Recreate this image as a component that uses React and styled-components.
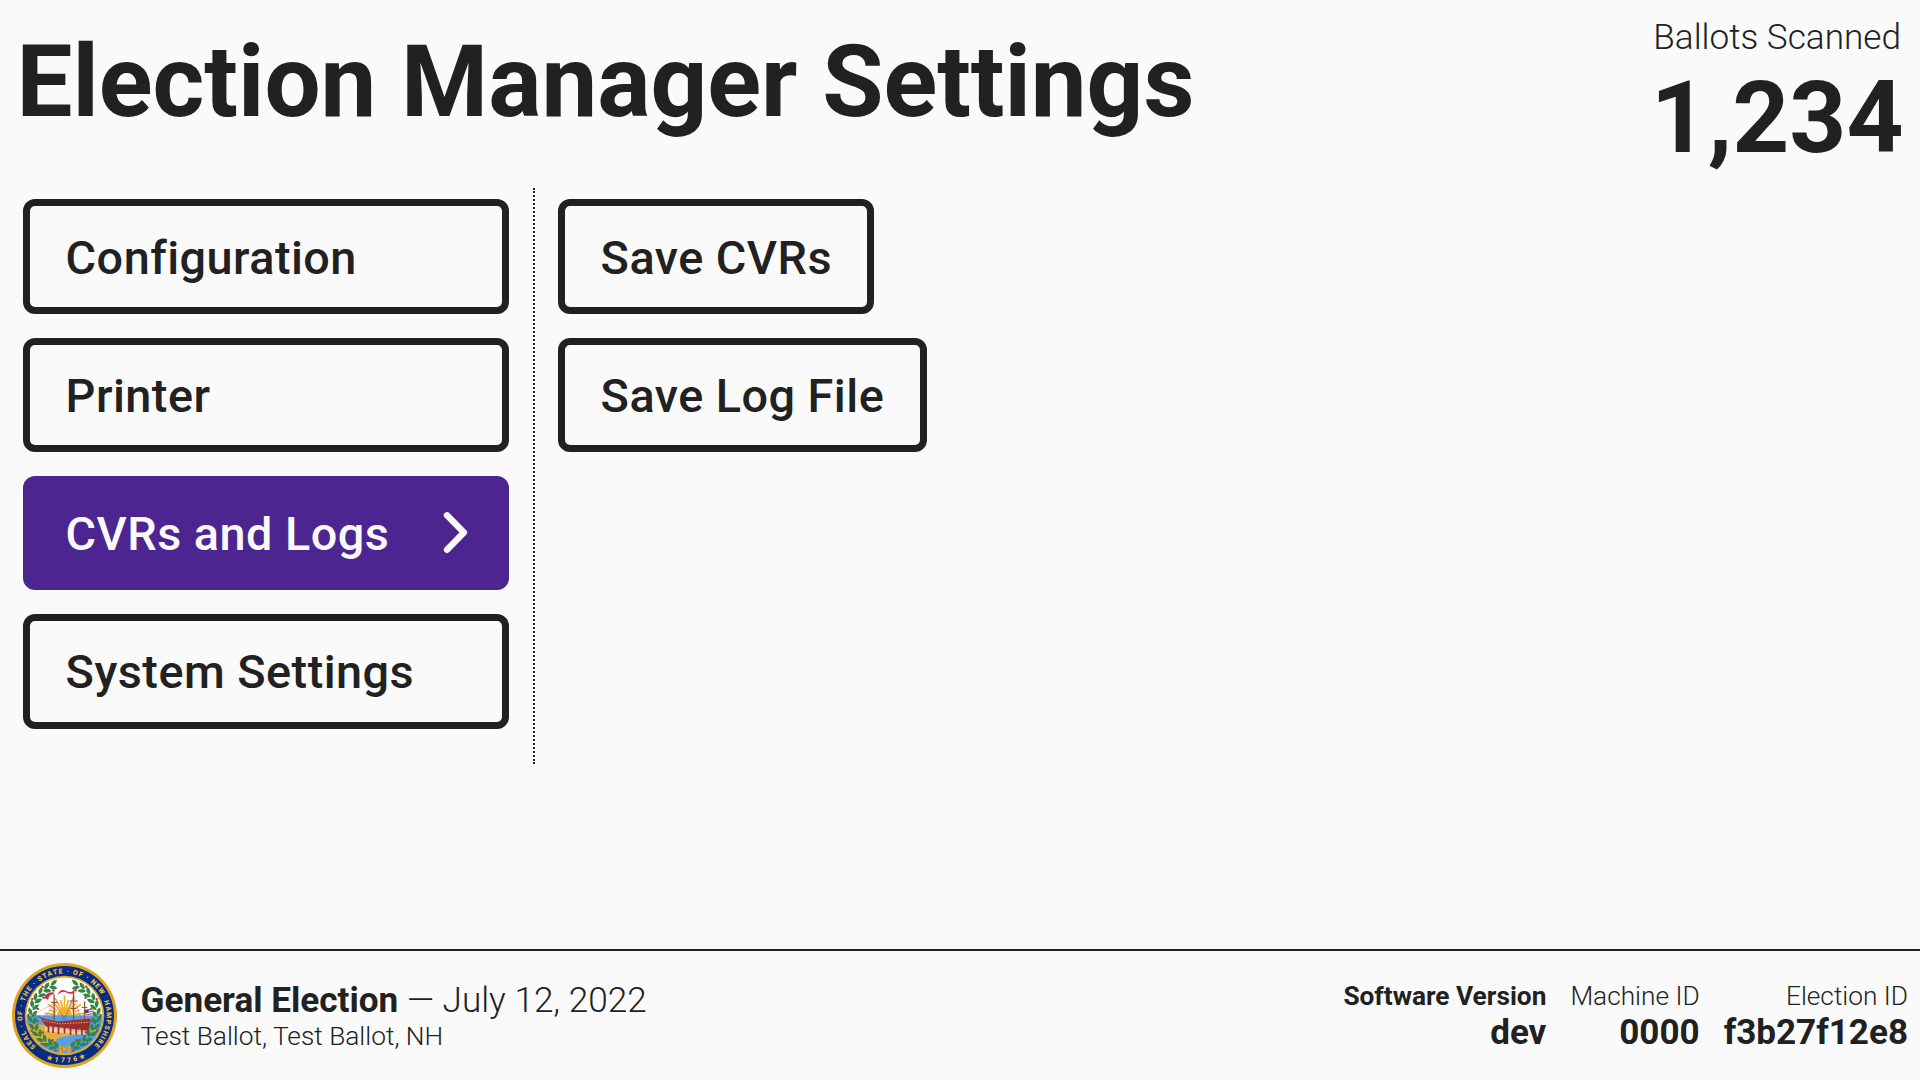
import React from 'react';
import styled, { createGlobalStyle, css } from 'styled-components';

const INK = '#212121';
const PAPER = '#fafafa';
const PURPLE = '#4d2590';

const GlobalStyle = createGlobalStyle`
  *, *::before, *::after { box-sizing: border-box; }
  html, body, #root { height: 100%; }
  body {
    margin: 0;
    background: ${PAPER};
    color: ${INK};
    font-family: Roboto, 'Liberation Sans', sans-serif;
    overflow: hidden;
  }
`;

const Screen = styled.div`
  display: flex;
  flex-direction: column;
  width: 100%;
  height: 100vh;
`;

const Header = styled.header`
  display: flex;
  justify-content: space-between;
  align-items: flex-start;
  height: 188px;
  padding: 17px 16.5px 0;
`;

const Title = styled.h1`
  margin: 7px 0 0;
  font-size: 99.5px;
  line-height: 117px;
  font-weight: 700;
  white-space: nowrap;
`;

const BallotCount = styled.div`
  display: flex;
  flex-direction: column;
  align-items: flex-end;
`;

const CountLabel = styled.div`
  padding-right: 2.5px;
  font-size: 35.15px;
  line-height: 41px;
  font-weight: 300;
`;

const CountValue = styled.div`
  margin-top: 2px;
  font-size: 99.5px;
  line-height: 117px;
  font-weight: 700;
`;

const Main = styled.main`
  display: flex;
  flex: 1;
  align-items: flex-start;
`;

const Column = styled.div`
  display: flex;
  flex-direction: column;
  align-items: ${(p) => (p.$fill ? 'stretch' : 'flex-start')};
  gap: 23.9px;
  padding: 11.4px 23px 35.3px;
`;

const TabColumn = styled(Column)`
  width: 535px;
  padding-right: 24px;
  border-right: 2px dotted ${INK};
`;

const Button = styled.button`
  display: flex;
  align-items: center;
  justify-content: space-between;
  height: 114.4px;
  padding: 3px 35.3px 0 35.6px;
  border: 7px solid ${INK};
  border-radius: 12px;
  background: transparent;
  color: ${INK};
  font: 500 46.8px/55px Roboto, 'Liberation Sans', sans-serif;
  letter-spacing: 0.01em;
  white-space: nowrap;
  ${(p) =>
    p.$selected &&
    css`
      border-color: ${PURPLE};
      background: ${PURPLE};
      color: ${PAPER};
    `}
`;

const Chevron = styled.svg`
  width: 24px;
  height: 44px;
  margin-bottom: 3px;
  overflow: visible;
`;

const Footer = styled.footer`
  display: flex;
  align-items: center;
  height: 131px;
  padding: 0 12px;
  border-top: 2px solid ${INK};
`;

const SealImage = styled.svg`
  width: 105px;
  height: 105px;
  margin-right: 23.5px;
`;

const ElectionInfo = styled.div`
  flex: 1;
  white-space: nowrap;
`;

const ElectionLine = styled.div`
  font-size: 35.15px;
  line-height: 41px;
  font-weight: 300;
`;

const Strong = styled.span`
  font-weight: 700;
`;

const PrecinctLine = styled.div`
  margin-bottom: -1px;
  font-size: 26.3px;
  line-height: 31px;
  font-weight: 300;
`;

const Facts = styled.div`
  display: flex;
  gap: 24px;
`;

const Fact = styled.div`
  text-align: right;
  white-space: nowrap;
`;

const FactLabel = styled.div`
  padding-top: 2px;
  font-size: 26.25px;
  line-height: 31px;
  font-weight: ${(p) => (p.$bold ? 700 : 300)};
`;

const FactValue = styled.div`
  font-size: 35.05px;
  line-height: 40px;
  font-weight: 700;
`;

const SealText = styled.text`
  font: 900 20.5px Roboto, 'Liberation Sans', sans-serif;
  fill: #f0bd3c;
`;

const polar = (deg, r) => {
  const a = (deg * Math.PI) / 180;
  return [194 + r * Math.sin(a), 226 - r * Math.cos(a)];
};

const WREATH = [18, 31, 44, 57, 70, 83, 96, 109, 122, 135, 148, 160];

function Leaf({ deg, r, tilt }) {
  const [x, y] = polar(deg, r);
  return (
    <path
      d="M-13 0 Q0 -12 13 0 Q0 11 -13 0Z"
      transform={`translate(${x} ${y}) rotate(${tilt})`}
    />
  );
}

function Seal() {
  const sides = [1, -1];
  return (
    <SealImage viewBox="37 69 314 314" aria-label="Seal of the State of New Hampshire">
      <circle cx="194" cy="226" r="157" fill="#e2a21c" />
      <circle cx="194" cy="226" r="148" fill="#062d83" />
      <circle cx="194" cy="226" r="119" fill="#e2a21c" />
      <circle cx="194" cy="226" r="114" fill="#fff" />
      <clipPath id="seal-inner">
        <circle cx="194" cy="226" r="114" />
      </clipPath>
      <g clipPath="url(#seal-inner)">
        <g stroke="#edae2c" strokeWidth="5">
          {[-84, -70, -56, -42, -28, -14, 0, 14, 28, 42, 56, 70, 84].map((d, i) => {
            const [x1, y1] = polar(d, 26);
            const [x2, y2] = polar(d, i % 2 ? 48 : 60);
            return <line key={d} x1={x1} y1={y1} x2={x2} y2={y2} />;
          })}
        </g>
        <circle cx="194" cy="222" r="22" fill="#f2b22f" />
        <path d="M75 225 H313 V345 H75Z" fill="#539fe8" />
        <path d="M75 256 Q110 248 150 258 L285 268 L300 274 L225 284 Q185 288 168 296 Q180 302 150 307 L90 312Z" fill="#e5ad3c" />
        <g stroke="#9b4a43" strokeWidth="4" fill="none">
          <path d="M163 164 V244 M221 148 V250 M254 184 V252" />
          <path d="M153 187 H174 M209 183 H233 M212 205 H230 M246 202 H262" strokeWidth="3" />
          <path d="M104 221 L163 190 L132 238 M163 182 L195 240 L221 165 L246 245 M221 185 L187 240" strokeWidth="1" />
        </g>
        <path d="M104 222 L130 235 L175 244 L272 235 L266 279 L144 262 Q130 252 125 236Z" fill="#9e3029" />
        <path d="M132 241 L178 251 L268 246" fill="none" stroke="#ddb0a0" strokeWidth="3" strokeDasharray="4 4" />
        <path d="M134 261 L151 258 L260 271 L258 284 L138 273Z" fill="#f3ded4" opacity="0.75" />
        <path d="M146 256 V276 M160 257 V278 M176 258 V282 M194 259 V280 M212 260 V284 M229 260 V283 M246 260 V284" stroke="#922e29" strokeWidth="5" />
        <path d="M173 164 Q181 144 197 152 T222 151 L224 159 Q210 163 199 157 T173 164Z M132 173 Q143 155 162 157 L162 164 Q149 160 145 179Z" fill="#d32b42" />
        {sides.map((s) => (
          <g key={s}>
            <g fill="#34873f">
              {WREATH.map((d) => (
                <React.Fragment key={d}>
                  <Leaf deg={s * d} r={103} tilt={s > 0 ? d + 205 : 335 - d} />
                  <Leaf deg={s * (d + 4)} r={90} tilt={s > 0 ? d + 150 : 30 - d} />
                </React.Fragment>
              ))}
            </g>
            <g fill="#ce2940">
              {WREATH.map((d, i) => {
                const [x, y] = polar(s * (d + 6), i % 2 ? 108 : 82);
                return <circle key={d} cx={x} cy={y} r="3.5" />;
              })}
            </g>
          </g>
        ))}
        <path d="M255 210 L278 205 V222 L255 228Z" fill="#fff" />
        <path d="M255 211 L278 207 M256 218 L278 213 M255 225 L278 220" stroke="#c93247" strokeWidth="3" />
        <path d="M254 210 L266 207 V217 L254 221Z" fill="#24468b" />
        <path
          d="M175 316 Q186 314 194 323 Q203 314 214 317 L209 325 L213 340 L201 335 L194 329 L187 338 L175 339 L181 326Z"
          fill="#e6aa28"
        />
        <path d="M185 319 L188 334 M203 319 L201 333" stroke="#805d20" strokeWidth="2" />
      </g>
      <path id="seal-top" d="M109 319.4 A126 126 0 1 1 278.3 319.6" fill="none" />
      <path id="seal-bottom" d="M112 340 A140 140 0 0 0 276 340" fill="none" />
      <SealText>
        <textPath href="#seal-top" textLength="600" lengthAdjust="spacing">
          {'SEAL · OF · THE · STATE · OF · NEW \u00a0HAMPSHIRE'}
        </textPath>
      </SealText>
      <SealText>
        <textPath href="#seal-bottom" startOffset="31" textLength="122" lengthAdjust="spacing">
          ★1776★
        </textPath>
      </SealText>
    </SealImage>
  );
}

const TABS = ['Configuration', 'Printer', 'CVRs and Logs', 'System Settings'];
const ACTIONS = ['Save CVRs', 'Save Log File'];

export default function App() {
  return (
    <>
      <GlobalStyle />
      <Screen>
        <Header>
          <Title>Election Manager Settings</Title>
          <BallotCount>
            <CountLabel>Ballots Scanned</CountLabel>
            <CountValue>1,234</CountValue>
          </BallotCount>
        </Header>
        <Main>
          <TabColumn $fill>
            {TABS.map((tab) => (
              <Button key={tab} $selected={tab === 'CVRs and Logs'}>
                {tab}
                {tab === 'CVRs and Logs' && (
                  <Chevron viewBox="0 0 24 44">
                    <path
                      d="M4 4.3 L20.9 21.5 L4 38.8"
                      fill="none"
                      stroke="currentColor"
                      strokeWidth="6.4"
                      strokeLinecap="round"
                      strokeLinejoin="round"
                    />
                  </Chevron>
                )}
              </Button>
            ))}
          </TabColumn>
          <Column>
            {ACTIONS.map((action) => (
              <Button key={action}>{action}</Button>
            ))}
          </Column>
        </Main>
        <Footer>
          <Seal />
          <ElectionInfo>
            <ElectionLine>
              <Strong>General Election</Strong> — July 12, 2022
            </ElectionLine>
            <PrecinctLine>Test Ballot, Test Ballot, NH</PrecinctLine>
          </ElectionInfo>
          <Facts>
            <Fact>
              <FactLabel $bold>Software Version</FactLabel>
              <FactValue>dev</FactValue>
            </Fact>
            <Fact>
              <FactLabel>Machine ID</FactLabel>
              <FactValue>0000</FactValue>
            </Fact>
            <Fact>
              <FactLabel>Election ID</FactLabel>
              <FactValue>f3b27f12e8</FactValue>
            </Fact>
          </Facts>
        </Footer>
      </Screen>
    </>
  );
}
